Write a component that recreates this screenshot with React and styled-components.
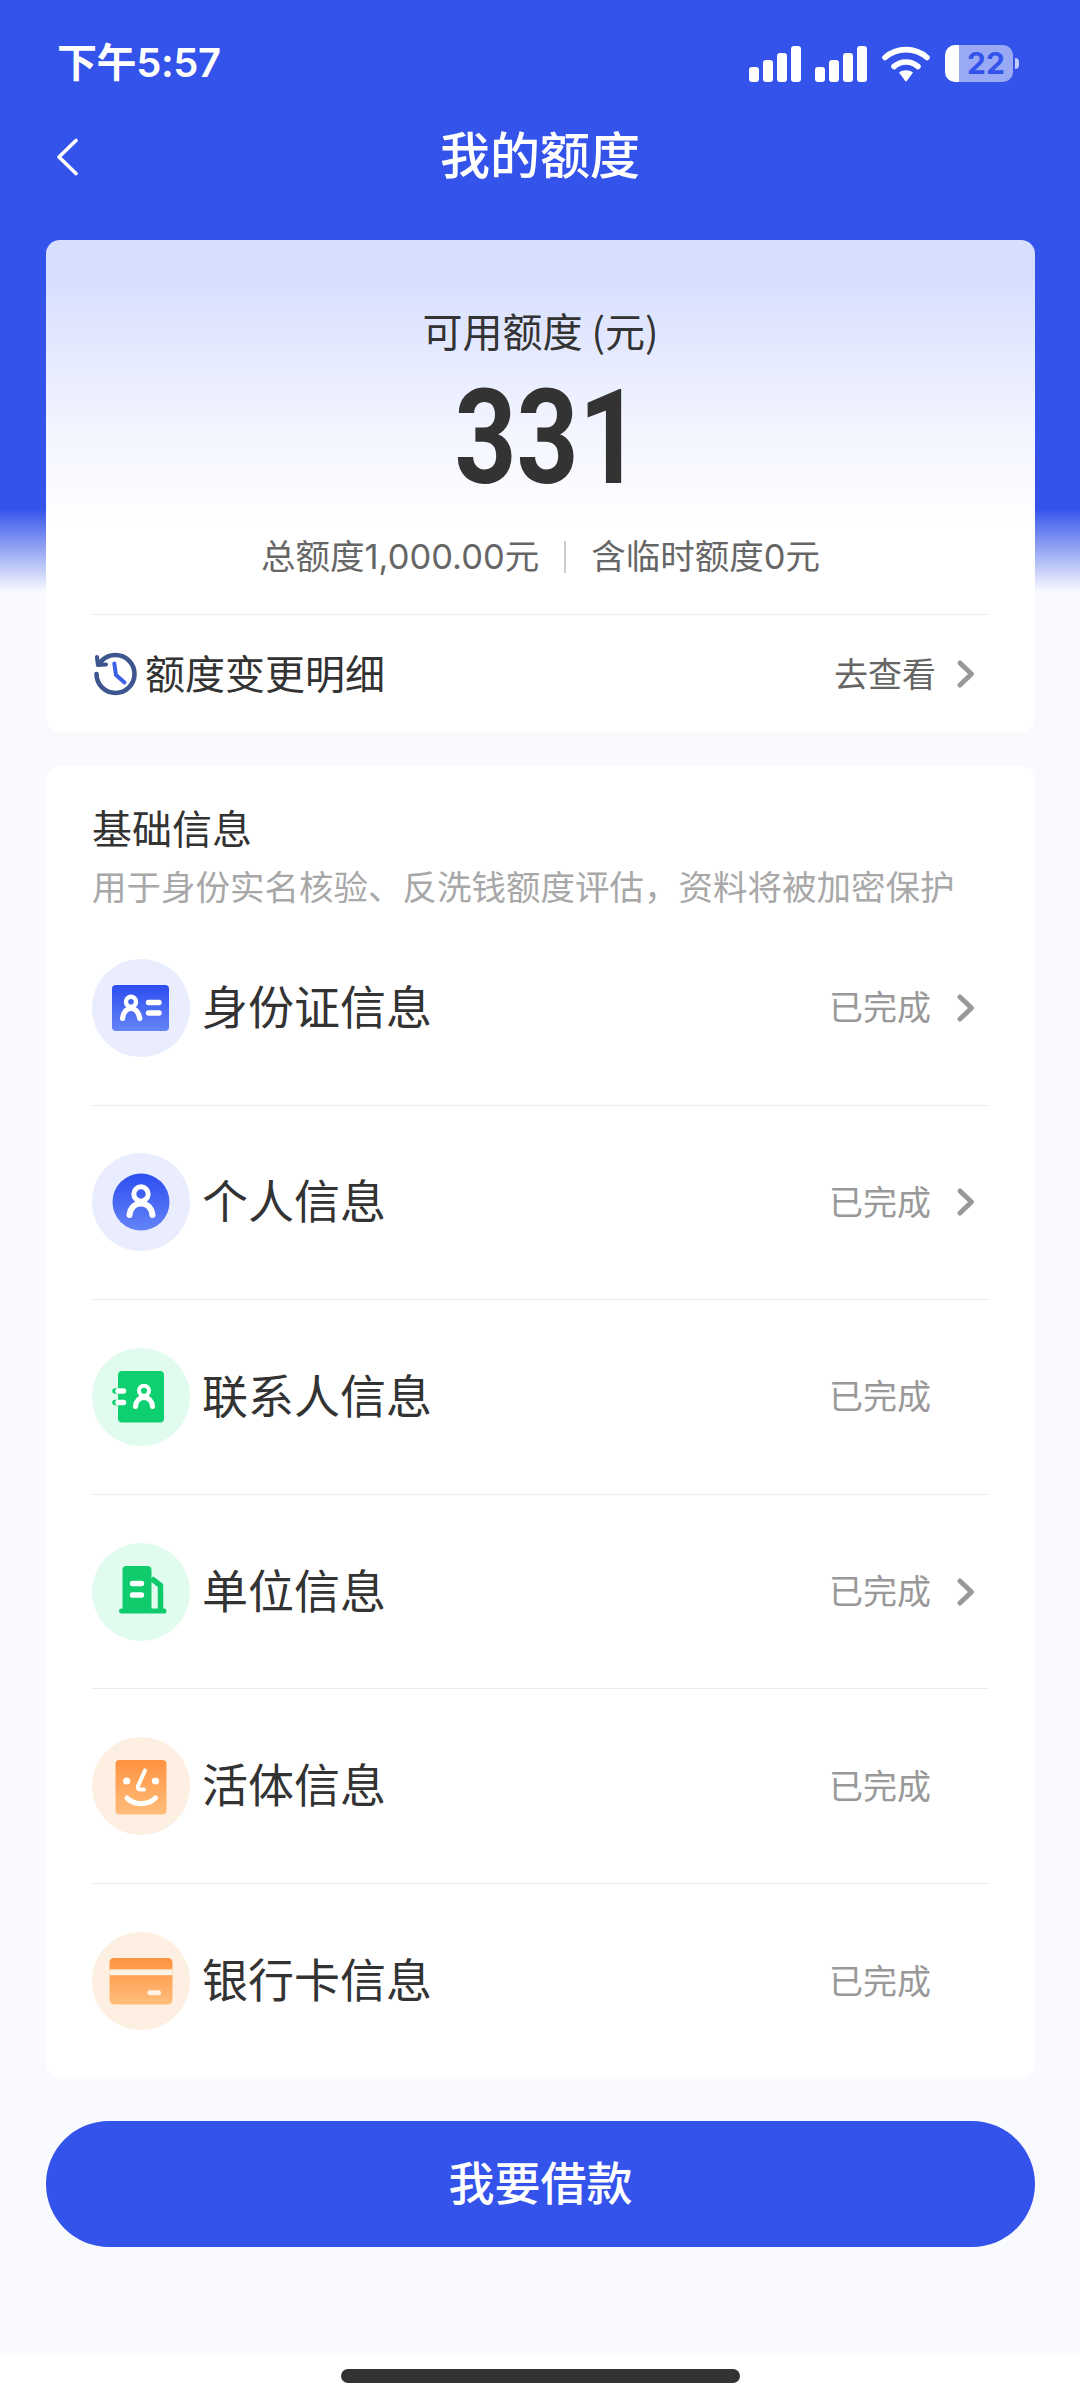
import React from 'react';
import styled, { createGlobalStyle } from 'styled-components';

const BLUE = '#3353EA';

const GlobalStyle = createGlobalStyle`
  html, body {
    margin: 0;
    padding: 0;
    background: #fff;
  }
  * {
    box-sizing: border-box;
  }
`;

const rows = [
  { name: '身份证信息', tone: 'blue', icon: 'card', arrow: true },
  { name: '个人信息', tone: 'blue', icon: 'person', arrow: true },
  { name: '联系人信息', tone: 'green', icon: 'contact', arrow: false },
  { name: '单位信息', tone: 'green', icon: 'building', arrow: true },
  { name: '活体信息', tone: 'orange', icon: 'face', arrow: false },
  { name: '银行卡信息', tone: 'orange', icon: 'bank', arrow: false },
];

const Chevron = () => (
  <ChevronSvg width="20" height="30" viewBox="0 0 20 30" fill="none">
    <path d="M4 4 L15.5 15 L4 26" stroke="#999" strokeWidth="5" strokeLinecap="round" strokeLinejoin="round" />
  </ChevronSvg>
);

const Gradients = () => (
  <svg width="0" height="0" style={{ position: 'absolute' }}>
    <defs>
      <linearGradient id="blueFill" x1="0" y1="0" x2="0" y2="1">
        <stop offset="0" stopColor="#2D4DF0" />
        <stop offset="1" stopColor="#6484F8" />
      </linearGradient>
      <linearGradient id="orangeFill" x1="0" y1="0" x2="0" y2="1">
        <stop offset="0" stopColor="#FF9340" />
        <stop offset="1" stopColor="#FFBD7C" />
      </linearGradient>
    </defs>
  </svg>
);

const RowIcon = ({ type }) => {
  if (type === 'card') {
    return (
      <svg width="98" height="98" viewBox="0 0 98 98" fill="none">
        <rect x="20" y="26" width="57" height="46" rx="4" fill="url(#blueFill)" />
        <circle cx="39" cy="42.8" r="5" stroke="#fff" strokeWidth="4.4" />
        <path d="M30.5 59.5 C31.5 53 34 49.5 39 49.5 C44 49.5 46.5 53 47.8 59.5" stroke="#fff" strokeWidth="5.2" strokeLinecap="round" />
        <path d="M56.5 43.5 H67 M56.5 54 H67" stroke="#fff" strokeWidth="5.4" strokeLinecap="round" />
      </svg>
    );
  }
  if (type === 'person') {
    return (
      <svg width="98" height="98" viewBox="0 0 98 98" fill="none">
        <circle cx="49" cy="49" r="28.5" fill="url(#blueFill)" />
        <circle cx="49" cy="41" r="7.2" stroke="#fff" strokeWidth="5" />
        <path d="M37.5 62 C38.5 54.5 43 50.5 49 50.5 C55 50.5 59.5 54.5 60.5 62" stroke="#fff" strokeWidth="6" strokeLinecap="round" />
      </svg>
    );
  }
  if (type === 'contact') {
    return (
      <svg width="98" height="98" viewBox="0 0 98 98" fill="none">
        <rect x="26" y="23" width="46" height="51.5" rx="4" fill="#0FD070" />
        <path d="M23 43 H26 M23 54.5 H26" stroke="#0FD070" strokeWidth="5.4" strokeLinecap="round" />
        <path d="M26 43 H31.5 M26 54.5 H31.5" stroke="#fff" strokeWidth="5.4" strokeLinecap="round" />
        <circle cx="52" cy="42.8" r="5" stroke="#fff" strokeWidth="4" />
        <path d="M43.5 58.5 C44 52.5 47.5 49.5 52 49.5 C56.5 49.5 60 52.5 60.5 58.5" stroke="#fff" strokeWidth="5" strokeLinecap="round" />
      </svg>
    );
  }
  if (type === 'building') {
    return (
      <svg width="98" height="98" viewBox="0 0 98 98" fill="none">
        <path d="M30.5 67 V27 C30.5 24.5 32 23 34.5 23 H55.5 C58 23 59.5 24.5 59.5 27 V67 Z" fill="#0FCB6C" />
        <path d="M59.5 35.5 L68.5 42.5 V67" stroke="#0FCB6C" strokeWidth="5.5" strokeLinejoin="round" />
        <path d="M29.5 68 H72" stroke="#0FCB6C" strokeWidth="5" strokeLinecap="round" />
        <path d="M40.5 40.5 H49.5 M40.5 52 H49.5" stroke="#fff" strokeWidth="5.4" strokeLinecap="round" />
      </svg>
    );
  }
  if (type === 'face') {
    return (
      <svg width="98" height="98" viewBox="0 0 98 98" fill="none">
        <rect x="23.5" y="23" width="51" height="54.5" rx="4" fill="url(#orangeFill)" />
        <circle cx="34.7" cy="44" r="3.6" fill="#fff" />
        <circle cx="63.5" cy="44" r="3.6" fill="#fff" />
        <path d="M53 33.5 L46 49 C45.5 51.5 46.5 52.5 48.5 52.5 H52" stroke="#fff" strokeWidth="4" strokeLinecap="round" strokeLinejoin="round" />
        <path d="M35 61 C42 68.5 56 68.5 63.5 61" stroke="#fff" strokeWidth="5" strokeLinecap="round" />
      </svg>
    );
  }
  return (
    <svg width="98" height="98" viewBox="0 0 98 98" fill="none">
      <rect x="17.5" y="26" width="63" height="46.5" rx="4.5" fill="url(#orangeFill)" />
      <rect x="17.5" y="37.4" width="63" height="5.8" fill="#FFF3E6" />
      <path d="M58 60.8 H66.5" stroke="#FFF3E6" strokeWidth="5" strokeLinecap="round" />
    </svg>
  );
};

const SignalBars = () => (
  <svg width="52" height="36" viewBox="0 0 52 36" fill="#fff">
    <rect x="0" y="21" width="10" height="15" rx="3" />
    <rect x="14" y="14" width="10" height="22" rx="3" />
    <rect x="28" y="7" width="10" height="29" rx="3" />
    <rect x="42" y="0" width="10" height="36" rx="3" />
  </svg>
);

const WifiIcon = () => (
  <svg width="48" height="36" viewBox="0 0 48 36" fill="none">
    <path d="M3 11.5 C15 1 33 1 45 11.5" stroke="#fff" strokeWidth="5.6" strokeLinecap="round" />
    <path d="M12 20.5 C19 14.5 29 14.5 36 20.5" stroke="#fff" strokeWidth="5.6" strokeLinecap="round" />
    <path d="M17 26.5 C21 23.5 27 23.5 31 26.5 L24.8 35 C24.4 35.6 23.6 35.6 23.2 35 Z" fill="#fff" />
  </svg>
);

const App = () => {
  return (
    <>
      <GlobalStyle />
      <Gradients />
      <Page>
        <StatusBar>
          <Time>下午5:57</Time>
          <StatusIcons>
            <SignalGroup>
              <SignalBars />
              <SignalBars />
            </SignalGroup>
            <WifiIcon />
            <Battery>22</Battery>
          </StatusIcons>
        </StatusBar>

        <NavBar>
          <BackButton>
            <svg width="24" height="38" viewBox="0 0 24 38" fill="none">
              <path d="M21 2.5 L4 19 L21 35.5" stroke="#fff" strokeWidth="3.6" strokeLinecap="round" strokeLinejoin="round" />
            </svg>
          </BackButton>
          <Title>我的额度</Title>
        </NavBar>

        <Content>
          <QuotaCard>
            <QuotaLabel>可用额度 (元)</QuotaLabel>
            <QuotaValue><span>331</span></QuotaValue>
            <QuotaMeta>
              <span>总额度1,000.00元</span>
              <MetaSplit />
              <span>含临时额度0元</span>
            </QuotaMeta>
            <DetailRow>
              <DetailLeft>
                <svg width="45" height="44" viewBox="0 0 45 44" fill="none">
                  <path d="M8 9.5 C11.5 5.5 16.8 3 22.5 3 C33 3 41.5 11.5 41.5 22 C41.5 32.5 33 41 22.5 41 C12 41 3.5 32.5 3.5 22" stroke="#3D5690" strokeWidth="4.6" strokeLinecap="round" />
                  <path d="M4 5 L5 13 L13 12.5" stroke="#3D5690" strokeWidth="4.2" strokeLinecap="round" strokeLinejoin="round" />
                  <path d="M21.3 11.5 L23 23 L31.5 30.5" stroke="#3A62E6" strokeWidth="4" strokeLinecap="round" strokeLinejoin="round" />
                </svg>
                <DetailText>额度变更明细</DetailText>
              </DetailLeft>
              <DetailRight>
                <DetailLink>去查看</DetailLink>
                <Chevron />
              </DetailRight>
            </DetailRow>
          </QuotaCard>

          <InfoCard>
            <InfoHead>
              <InfoTitle>基础信息</InfoTitle>
              <InfoDesc>用于身份实名核验、反洗钱额度评估，资料将被加密保护</InfoDesc>
            </InfoHead>
            {rows.map((row) => (
              <InfoRow key={row.name}>
                <IconCircle $tone={row.tone}>
                  <RowIcon type={row.icon} />
                </IconCircle>
                <RowName>{row.name}</RowName>
                <RowStatus>已完成</RowStatus>
                <ArrowSlot>{row.arrow && <Chevron />}</ArrowSlot>
              </InfoRow>
            ))}
          </InfoCard>

          <BorrowButton>我要借款</BorrowButton>
        </Content>

        <HomeArea>
          <HomeBar />
        </HomeArea>
      </Page>
    </>
  );
};

const Page = styled.div`
  width: 1080px;
  height: 2400px;
  display: flex;
  flex-direction: column;
  overflow: hidden;
  font-family: "Noto Sans CJK SC", "Noto Sans", sans-serif;
  background: linear-gradient(to bottom, ${BLUE} 0, ${BLUE} 508px, #F9FAFE 592px, #F9FAFE 100%);
`;

const StatusBar = styled.div`
  height: 120px;
  padding: 0 67px 0 57px;
  display: flex;
  justify-content: space-between;
  align-items: flex-start;
`;

const Time = styled.div`
  margin-top: 35px;
  font-family: "Inter", "Noto Sans CJK SC", sans-serif;
  font-size: 40px;
  line-height: 56px;
  font-weight: 600;
  letter-spacing: -0.4px;
  color: #fff;
`;

const StatusIcons = styled.div`
  margin-top: 45px;
  display: flex;
  align-items: flex-end;
  gap: 15px;
`;

const SignalGroup = styled.div`
  display: flex;
  gap: 14px;
`;

const Battery = styled.div`
  position: relative;
  width: 68px;
  height: 37px;
  padding-left: 14px;
  border-radius: 10px;
  background: linear-gradient(to right, #fff 0, #fff 21%, rgba(255, 255, 255, 0.5) 21%);
  font-family: "Inter", sans-serif;
  font-size: 30px;
  line-height: 37px;
  font-weight: 700;
  text-align: center;
  color: ${BLUE};

  &::after {
    content: '';
    position: absolute;
    right: -6px;
    top: 13px;
    width: 4px;
    height: 11px;
    border-radius: 0 4px 4px 0;
    background: rgba(255, 255, 255, 0.7);
  }
`;

const NavBar = styled.div`
  position: relative;
  height: 72px;
  display: flex;
  align-items: center;
  justify-content: center;
`;

const BackButton = styled.div`
  position: absolute;
  left: 55px;
  top: 18px;
  display: flex;
`;

const Title = styled.h1`
  margin: 0 0 8px;
  font-size: 50px;
  line-height: 64px;
  font-weight: 500;
  color: #fff;
`;

const Content = styled.div`
  flex: 1;
  padding: 48px 45px 0 46px;
  display: flex;
  flex-direction: column;
`;

const QuotaCard = styled.section`
  height: 492px;
  padding-top: 64px;
  border-radius: 14px;
  display: flex;
  flex-direction: column;
  align-items: center;
  background: linear-gradient(to bottom, #D8DFFE 0, #D8DFFE 8%, #F4F6FF 40%, #fff 58%);
`;

const QuotaLabel = styled.div`
  font-size: 40px;
  line-height: 52px;
  color: #333;
`;

const QuotaValue = styled.div`
  height: 136px;
  margin-top: 14px;
  font-family: "Roboto", sans-serif;
  font-size: 132px;
  line-height: 136px;
  font-weight: 700;
  color: #333;

  span {
    display: inline-block;
    margin-left: 14px;
    transform: scaleX(0.82);
  }
`;

const QuotaMeta = styled.div`
  margin-top: 27px;
  display: flex;
  align-items: center;
  font-family: "Inter", "Noto Sans CJK SC", sans-serif;
  font-size: 34.5px;
  line-height: 48px;
  color: #666;
`;

const MetaSplit = styled.i`
  width: 2px;
  height: 32px;
  margin: 0 25px;
  background: #ccc;
`;

const DetailRow = styled.div`
  width: calc(100% - 92px);
  margin-top: 33px;
  flex: 1;
  padding: 0 13px 0 1px;
  border-top: 1px solid #EDEDED;
  display: flex;
  align-items: center;
  justify-content: space-between;
`;

const DetailLeft = styled.div`
  display: flex;
  align-items: center;
  gap: 7px;
`;

const DetailText = styled.span`
  padding-bottom: 4px;
  font-size: 40px;
  line-height: 56px;
  color: #333;
`;

const DetailRight = styled.div`
  display: flex;
  align-items: center;
  gap: 20px;
`;

const DetailLink = styled.span`
  padding-bottom: 2px;
  font-size: 34px;
  line-height: 48px;
  color: #666;
`;

const ChevronSvg = styled.svg`
  display: block;
  flex: none;
`;

const InfoCard = styled.section`
  margin-top: 34px;
  height: 1311px;
  padding: 0 46px;
  border-radius: 14px;
  background: #fff;
`;

const InfoHead = styled.div`
  height: 145px;
  padding-top: 33px;
`;

const InfoTitle = styled.h2`
  margin: 0;
  font-size: 40px;
  line-height: 56px;
  font-weight: 400;
  color: #333;
`;

const InfoDesc = styled.p`
  margin: 6px 0 0;
  font-size: 34.5px;
  line-height: 48px;
  white-space: nowrap;
  color: #A8A8A8;
`;

const InfoRow = styled.div`
  height: 194.6px;
  display: flex;
  align-items: center;
  border-bottom: 1px solid #EDEDED;

  &:last-child {
    border-bottom: none;
  }
`;

const toneColors = {
  blue: '#E9EDFD',
  green: '#E2FBEF',
  orange: '#FDF0E2',
};

const IconCircle = styled.div`
  width: 98px;
  height: 98px;
  flex: none;
  border-radius: 50%;
  background: ${(props) => toneColors[props.$tone]};
`;

const RowName = styled.div`
  flex: 1;
  margin-left: 12px;
  padding-bottom: 8px;
  font-size: 46px;
  line-height: 64px;
  color: #333;
`;

const RowStatus = styled.div`
  padding-bottom: 3px;
  font-size: 34px;
  line-height: 48px;
  color: #999;
`;

const ArrowSlot = styled.div`
  width: 58px;
  display: flex;
  justify-content: flex-end;
  padding-right: 13px;
`;

const BorrowButton = styled.button`
  flex: none;
  width: 100%;
  height: 126px;
  margin-top: 44px;
  padding: 0 0 8px;
  border: none;
  border-radius: 63px;
  background: ${BLUE};
  font-family: inherit;
  font-size: 46px;
  font-weight: 500;
  color: #fff;
`;

const HomeArea = styled.div`
  height: 45px;
  background: #fff;
  display: flex;
  justify-content: center;
  padding-top: 14px;
`;

const HomeBar = styled.div`
  width: 399px;
  height: 14px;
  border-radius: 7px;
  background: #333;
`;

export default App;
